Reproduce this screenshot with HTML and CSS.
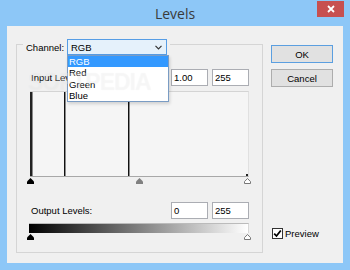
FILE: index.html
```html
<!DOCTYPE html>
<html lang="en">
<head>
    <meta charset="UTF-8">
    <title>Levels</title>
    <link rel="stylesheet" href="styles.css">
</head>
<body>
    <div class="window">
        <!-- Title Bar -->
        <div class="titlebar">
            <span class="title">Levels</span>
            <span class="close-btn">
                <svg width="8" height="8" viewBox="0 0 8 8"><path d="M1 1L7 7M7 1L1 7" stroke="#fff" stroke-width="1.8"/></svg>
            </span>
        </div>

        <div class="client">
            <!-- Levels Group -->
            <div class="group">
                <div class="group-head">
                    <span class="channel-label">Channel:</span>
                    <div class="select">
                        <span>RGB</span>
                        <svg class="chevron" width="7" height="5" viewBox="0 0 7 5"><path d="M0.5 0.8L3.5 3.8L6.5 0.8" fill="none" stroke="#333" stroke-width="1.2"/></svg>
                        <ul class="dropdown">
                            <li class="active">RGB</li>
                            <li>Red</li>
                            <li>Green</li>
                            <li>Blue</li>
                        </ul>
                    </div>
                </div>

                <div class="level-row">
                    <span class="row-label">Input Levels:</span>
                    <div class="fields">
                        <div class="field">0</div>
                        <div class="field">1.00</div>
                        <div class="field">255</div>
                    </div>
                </div>

                <div class="histogram">
                    <span class="bar bar-wide" style="left: 0px"></span>
                    <span class="bar" style="left: 34px"></span>
                    <span class="bar" style="left: 98px"></span>
                    <span class="corner-mark"></span>
                </div>
                <div class="sliders">
                    <svg class="handle" style="left: -3px" width="7" height="6" viewBox="0 0 7 6"><path d="M3.5 0L7 3.5V6H0V3.5Z" fill="#000"/></svg>
                    <svg class="handle" style="left: 106px" width="7" height="6" viewBox="0 0 7 6"><path d="M3.5 0L7 3.5V6H0V3.5Z" fill="#808080"/></svg>
                    <svg class="handle" style="left: 214px" width="7" height="6" viewBox="0 0 7 6"><path d="M3.5 0.5L6.5 3.6V5.5H0.5V3.6Z" fill="#fff" stroke="#777" stroke-width="1"/></svg>
                </div>

                <div class="level-row output-row">
                    <span class="row-label">Output Levels:</span>
                    <div class="fields">
                        <div class="field">0</div>
                        <div class="field">255</div>
                    </div>
                </div>

                <div class="gradient"></div>
                <div class="sliders">
                    <svg class="handle" style="left: -3px" width="7" height="6" viewBox="0 0 7 6"><path d="M3.5 0L7 3.5V6H0V3.5Z" fill="#000"/></svg>
                    <svg class="handle" style="left: 214px" width="7" height="6" viewBox="0 0 7 6"><path d="M3.5 0.5L6.5 3.6V5.5H0.5V3.6Z" fill="#fff" stroke="#777" stroke-width="1"/></svg>
                </div>
            </div>

            <!-- Buttons -->
            <div class="side">
                <button class="btn btn-default">OK</button>
                <button class="btn">Cancel</button>
                <label class="preview">
                    <span class="checkbox">
                        <svg width="9" height="9" viewBox="0 0 9 9"><path d="M1.2 4.6L3.5 7L7.8 1.5" fill="none" stroke="#000" stroke-width="1.8"/></svg>
                    </span>
                    Preview
                </label>
            </div>
        </div>

        <div class="watermark">SOFTPEDIA</div>
    </div>
</body>
</html>
```

FILE: styles.css
```css
/* General Styles */
body {
    margin: 0;
    padding: 0;
    font-family: 'Liberation Sans', Arial, sans-serif;
    font-size: 9.5px;
    color: #000;
    background-color: #8dc7f7;
}

.window {
    position: relative;
    width: 350px;
    height: 270px;
    background-color: #8dc7f7;
    overflow: hidden;
}

/* Title Bar */
.titlebar {
    height: 26px;
    text-align: center;
}

.title {
    font-family: 'Open Sans', sans-serif;
    font-size: 14px;
    line-height: 27px;
    color: #3a3a3a;
}

.close-btn {
    position: absolute;
    top: 1px;
    right: 6px;
    width: 27px;
    height: 16px;
    background-color: #c75050;
    display: flex;
    align-items: center;
    justify-content: center;
}

/* Client Area */
.client {
    display: flex;
    height: 237px;
    margin: 0 7px;
    padding: 18px 0 0 9px;
    box-sizing: border-box;
    background-color: #f0f0f0;
}

.group {
    width: 247px;
    height: 209px;
    padding: 0 13px;
    box-sizing: border-box;
    border: 1px solid #d5d5d5;
}

.group-head {
    display: flex;
    align-items: center;
    width: fit-content;
    height: 16px;
    margin: -6px 0 0 -7px;
    padding: 0 3px;
    background-color: #f0f0f0;
}

.channel-label {
    width: 41px;
}

.select {
    position: relative;
    display: flex;
    align-items: center;
    justify-content: space-between;
    width: 100px;
    height: 16px;
    padding: 0 4px 0 3px;
    box-sizing: border-box;
    border: 1px solid #569de5;
    background-color: #e5f1fb;
}

.dropdown {
    position: absolute;
    top: 15px;
    left: -1px;
    width: 100px;
    margin: 0;
    padding: 0;
    list-style: none;
    background-color: #fff;
    border: 1px solid #7a9cc4;
    box-shadow: 1px 2px 3px rgba(0, 0, 0, 0.15);
    z-index: 5;
}

.dropdown li {
    height: 11.25px;
    line-height: 11.25px;
    padding-left: 1px;
}

.dropdown li.active {
    background-color: #3399ff;
    color: #fff;
}

/* Level Rows */
.level-row {
    display: flex;
    align-items: center;
    justify-content: space-between;
    height: 17px;
    margin-top: 14px;
    padding-left: 1px;
}

.output-row {
    margin-top: 17px;
}

.fields {
    display: flex;
    gap: 4px;
}

.field {
    width: 37px;
    height: 17px;
    padding-left: 2px;
    box-sizing: border-box;
    line-height: 15px;
    background-color: #fff;
    border: 1px solid #abadb3;
}

.histogram {
    position: relative;
    height: 86px;
    margin-top: 5px;
    box-sizing: border-box;
    background-color: #f5f5f5;
    border-top: 1px solid #d4d4d4;
    border-right: 1px solid #e0e0e0;
    border-bottom: 1px solid #a8a8a8;
}

.bar {
    position: absolute;
    top: 0;
    bottom: 0;
    width: 1px;
    background-color: #111;
    box-shadow: 1px 0 0 #8a8a8a;
}

.bar-wide {
    width: 2px;
    background-color: #222;
}

.corner-mark {
    position: absolute;
    right: 0;
    bottom: 0;
    width: 2px;
    height: 2px;
    background-color: #222;
}

.sliders {
    position: relative;
    height: 7px;
    margin-top: 1px;
}

.handle {
    position: absolute;
    top: 0;
}

.gradient {
    height: 10px;
    margin: 4px 0 0 -1px;
    box-sizing: border-box;
    background: linear-gradient(to right, #000, #fff);
    border-top: 1px solid #bbb;
    border-right: 1px solid #d8d8d8;
}

/* Buttons */
.side {
    display: flex;
    flex-direction: column;
    width: 62px;
    margin-left: 8px;
    padding-top: 1px;
}

.btn {
    height: 18px;
    padding: 0;
    font-family: 'Liberation Sans', Arial, sans-serif;
    font-size: 9.5px;
    color: #000;
    background-color: #e1e1e1;
    border: 1px solid #adadad;
}

.btn + .btn {
    margin-top: 6px;
}

.btn-default {
    border-color: #5b9fe0;
}

.preview {
    display: flex;
    align-items: center;
    gap: 2px;
    margin-top: 141px;
    margin-left: 1px;
}

.checkbox {
    display: flex;
    align-items: center;
    justify-content: center;
    width: 11px;
    height: 11px;
    box-sizing: border-box;
    background-color: #fff;
    border: 1px solid #333;
}

/* Watermark */
.watermark {
    position: absolute;
    top: 69px;
    left: 28px;
    width: 140px;
    font-weight: bold;
    font-size: 23px;
    letter-spacing: -1px;
    color: rgba(255, 255, 255, 0.3);
    text-shadow: 0 0 1px rgba(0, 0, 0, 0.05);
    pointer-events: none;
    z-index: 10;
}
```
